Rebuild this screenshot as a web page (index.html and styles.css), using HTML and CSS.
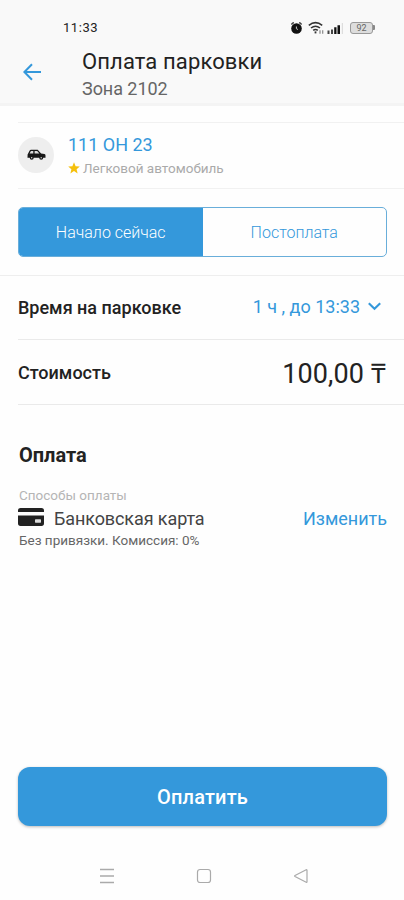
FILE: index.html
```html
<!DOCTYPE html>
<html lang="ru">
<head>
<meta charset="utf-8">
<title>Оплата парковки</title>
<link rel="stylesheet" href="styles.css">
</head>
<body>
<div class="screen">
  <header class="header">
    <div class="status">
      <span class="clock">11:33</span>
      <div class="status-icons">
        <svg class="alarm" width="13" height="14" viewBox="0 0 13 14"><circle cx="6.5" cy="7.5" r="5.3" fill="#111"/><path d="M1.8 3 3.2 1.8M11.2 3 9.8 1.8" stroke="#444" stroke-width="1.6" stroke-linecap="round"/><path d="M6.4 5.5v2.2l1.5.8" fill="none" stroke="#ccc" stroke-width="1"/></svg>
        <svg class="wifi" width="17" height="14" viewBox="0 0 17 14" fill="none" stroke="#333" stroke-width="1.6"><path d="M.8 4.4Q7.5-1 14.2 4.4M3 7q4.5-3.6 9 0M5.2 9.4q2.3-1.8 4.6 0"/><path d="M7.5 10.4v2" stroke-width="1.8"/><path d="M12 9.3v3.4M14.7 9.3v3.4" stroke="#888" stroke-width="1.2"/></svg>
        <svg class="signal" width="17" height="14" viewBox="0 0 17 14"><path d="M.5 9.5h2V13h-2zM4 8.5h2V13H4z" fill="#444"/><path d="M7.2 6.3h2.3V13H7.2zM10.5 4.3H13V13h-2.5z" fill="#111"/><path d="M14.8 2h1.2v11h-1.2z" fill="#ddd"/></svg>
        <div class="battery"><span>92</span></div>
        <div class="battery-tip"></div>
      </div>
    </div>
    <div class="titlebar">
      <svg width="20" height="18" viewBox="0 0 20 18" fill="none" stroke="#3498db" stroke-width="2"><path d="M18 9H1.5M9 1.2 1.4 9 9 16.8"/></svg>
      <div class="titles">
        <h1>Оплата парковки</h1>
        <p>Зона 2102</p>
      </div>
    </div>
  </header>
  <main>
    <section class="vehicle">
      <div class="avatar">
        <svg width="19" height="12" viewBox="0 0 19 12"><path d="M.6 5.4 2.7 1.5Q3 .8 4 .8h6.7l3.4 3.7 3.4.6q1 .3 1 1.4v2.3H.5z" fill="#171717"/><path d="M3.9 2.1h2.4v2.5H2.6zM7.6 2.1h2.6l2.2 2.5H7.6z" fill="#ddd"/><circle cx="4.7" cy="8.8" r="2" fill="#171717"/><circle cx="14.2" cy="8.8" r="2" fill="#171717"/><circle cx="4.7" cy="8.8" r=".7" fill="#ddd"/><circle cx="14.2" cy="8.8" r=".7" fill="#ddd"/></svg>
      </div>
      <div class="vehicle-info">
        <div class="plate">111 ОН 23</div>
        <div class="kind"><svg width="12" height="12" viewBox="0 0 12 12"><path d="m6 .3 1.6 3.9 4.2.3-3.2 2.7 1 4.2L6 9.1l-3.6 2.3 1-4.2L.2 4.5l4.2-.3z" fill="#f5c00c"/></svg><span>Легковой автомобиль</span></div>
      </div>
    </section>
    <div class="segments">
      <div class="segment active"><span>Начало сейчас</span></div>
      <div class="segment"><span>Постоплата</span></div>
    </div>
    <section class="row time">
      <span class="label">Время на парковке</span>
      <span class="duration"><span>1 ч , до 13:33</span><svg width="13" height="9" viewBox="0 0 13 9" fill="none" stroke="#3498db" stroke-width="2.1"><path d="m.8 1.2 5.7 5.5 5.7-5.5"/></svg></span>
    </section>
    <section class="row cost">
      <span class="label">Стоимость</span>
      <span class="price">100,00 <span class="currency">₸</span></span>
    </section>
    <section class="payment">
      <h2>Оплата</h2>
      <p class="caption">Способы оплаты</p>
      <div class="method">
        <svg width="26" height="18" viewBox="0 0 26 18"><path d="M2.5 0h21Q26 0 26 2.5V4H0V2.5Q0 0 2.5 0zM0 7.4h26v7.9Q26 18 23.5 18h-21Q0 18 0 15.3z" fill="#222"/><rect x="17" y="11.3" width="6" height="3.4" rx=".6" fill="#ddd"/></svg>
        <span class="method-name">Банковская карта</span>
        <span class="change">Изменить</span>
      </div>
      <p class="note">Без привязки. Комиссия: 0%</p>
    </section>
  </main>
  <footer>
    <div class="pay"><span>Оплатить</span></div>
    <nav>
      <svg width="16" height="16" viewBox="0 0 16 16" stroke="#aaa" stroke-width="1.3"><path d="M1 1.5h14M1 8h14M1 14.5h14"/></svg>
      <svg width="16" height="16" viewBox="0 0 16 16" fill="none" stroke="#aaa" stroke-width="1.2"><rect x="1.5" y="1.5" width="13" height="13" rx="2.5"/></svg>
      <svg width="16" height="16" viewBox="0 0 16 16" fill="none" stroke="#aaa" stroke-width="1.2" stroke-linejoin="round"><path d="M14 2.2v11.6q0 .8-.8.4L2 8.5q-.8-.5 0-1L13.2 1.8q.8-.3.8.4z"/></svg>
    </nav>
  </footer>
</div>
</body>
</html>
```
FILE: styles.css
```css
* { box-sizing: border-box; }
body { margin: 0; background: #fefefe; font-family: Roboto, "Liberation Sans", sans-serif; color: #222; }
h1, h2, p { margin: 0; font-weight: 400; }
svg { display: block; flex: none; }
.screen { width: 404px; height: 900px; display: flex; flex-direction: column; overflow: hidden; white-space: nowrap; }
.header { height: 106px; flex: none; background: #f9f9f9; border-bottom: 3px solid #f4f4f4; }
.status { height: 48px; padding: 7px 29px 0 63px; display: flex; align-items: center; justify-content: space-between; }
.clock { font-size: 13px; letter-spacing: .55px; }
.status-icons { display: flex; align-items: center; }
.alarm { margin-right: -1px; }
.wifi { margin-left: 6px; }
.signal { margin-left: 2px; }
.battery { margin-left: 6px; width: 23px; height: 12px; border: 1px solid #999; border-radius: 3px; background: #ddd; display: flex; align-items: center; justify-content: center; font-size: 9px; color: #666; }
.battery-tip { width: 2px; height: 5px; background: #888; border-radius: 0 1px 1px 0; }
.titlebar { display: flex; padding-left: 23px; }
.titlebar > svg { margin-top: 15px; }
.titles { margin-left: 39px; }
h1 { font-size: 22px; line-height: 27px; letter-spacing: .12px; }
.titles p { font-size: 18px; line-height: 27px; color: #666; letter-spacing: -.05px; }
main { flex: 1; }
.vehicle { margin: 16px 0 0 18px; height: 67px; border-top: 1px solid #f1f1f1; border-bottom: 1px solid #f1f1f1; display: flex; }
.avatar { width: 36px; height: 36px; border-radius: 50%; background: #eee; display: flex; align-items: center; justify-content: center; margin-top: 14px; }
.vehicle-info { margin: 10px 0 0 14px; }
.plate { font-size: 18px; line-height: 24px; color: #3498db; }
.kind { display: flex; align-items: center; gap: 3px; height: 22px; font-size: 13.5px; color: #aaa; }
.segments { margin: 18px 17px 0 18px; height: 50px; display: flex; border: 1px solid #69aeda; border-radius: 5px; overflow: hidden; }
.segment { flex: 1; display: flex; align-items: center; justify-content: center; font-size: 16px; font-weight: 300; color: #3498db; }
.segment.active { background: #3498db; color: #fff; }
.row { display: flex; align-items: center; justify-content: space-between; padding-right: 18px; }
.label { font-size: 18px; font-weight: 500; }
.time { margin-top: 18px; height: 64px; border-top: 1px solid #eee; padding-left: 18px; }
.cost { margin-left: 18px; height: 66px; border-top: 1px solid #eaeaea; border-bottom: 1px solid #eaeaea; }
.duration { display: flex; align-items: center; gap: 8px; color: #3498db; font-size: 18px; padding: 0 5px 2px 0; }
.price { font-size: 27px; letter-spacing: .1px; }
.currency { font-weight: 500; }
.payment { padding: 37px 17px 0 19px; }
h2 { font-size: 20px; line-height: 26px; font-weight: 700; }
.caption { margin-top: 19px; font-size: 13.5px; line-height: 17px; color: #b5b5b5; }
.method { display: flex; align-items: center; height: 26px; margin-top: 1px; }
.method > svg { margin-left: -1px; margin-bottom: 2px; }
.method-name { margin-left: 10px; font-size: 18px; color: #444; letter-spacing: -.1px; }
.change { margin-left: auto; font-size: 18px; color: #3498db; }
.note { font-size: 13.5px; line-height: 18px; color: #666; }
.pay { margin: 0 17px 0 18px; height: 59px; border-radius: 12px; background: #3498db; box-shadow: 0 1px 3px #0004; display: flex; align-items: center; justify-content: center; color: #fff; font-size: 20px; font-weight: 500; letter-spacing: .15px; }
nav { height: 74px; padding: 42px 95px 0 99px; display: flex; justify-content: space-between; }
```
